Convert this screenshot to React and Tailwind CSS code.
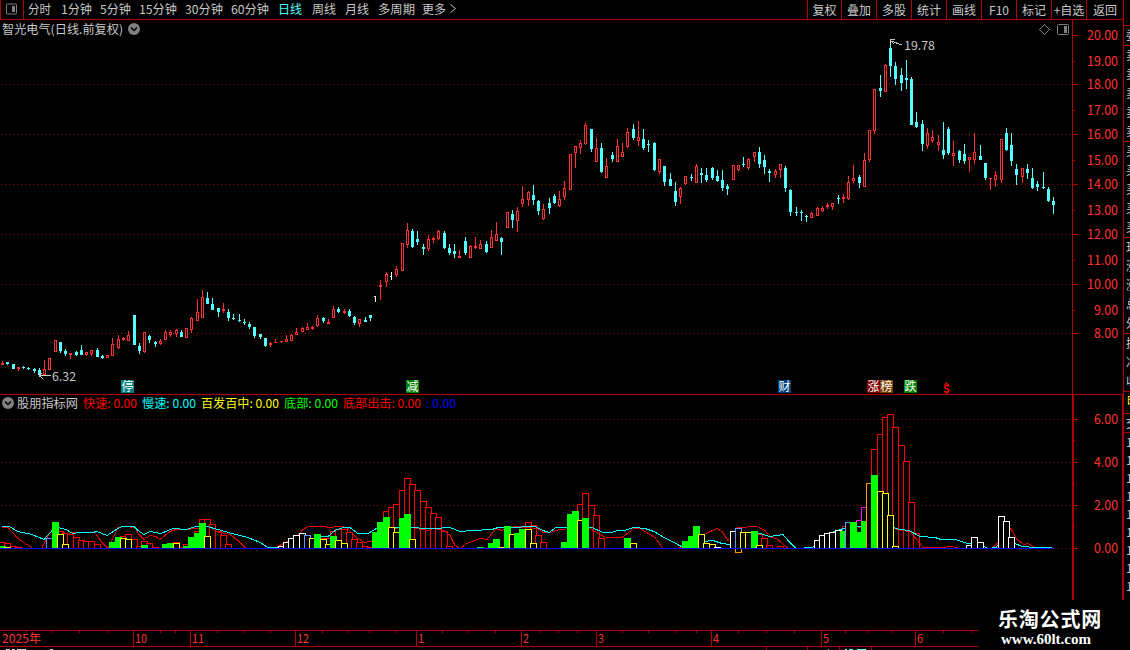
import React from 'react';

const RED = '#ff3232';
const CYAN = '#54ffff';
const LINE = '#b00000';

const periods = [
  { label: '分时', x: 28, w: 23 },
  { label: '1分钟', x: 61, w: 31 },
  { label: '5分钟', x: 100, w: 31 },
  { label: '15分钟', x: 139, w: 38 },
  { label: '30分钟', x: 185, w: 38 },
  { label: '60分钟', x: 231, w: 38 },
  { label: '日线', x: 278, w: 24, active: true },
  { label: '周线', x: 312, w: 24 },
  { label: '月线', x: 345, w: 24 },
  { label: '多周期', x: 378, w: 37 },
  { label: '更多', x: 422, w: 24 },
];

const actions = ['复权', '叠加', '多股', '统计', '画线', 'F10', '标记', '+自选', '返回'];

// x, high, body top, body bottom, low, up
const candles = [
  [2,361,363,365,365,1],[7,362,362,364,365,0],[13,364,364,369,369,0],[18,367,367,369,371,1],[23,366,367,368,369,0],
  [28,367,368,369,370,0],[34,368,369,371,373,0],[39,368,370,375,377,0],[44,360,369,375,375,1],[49,358,358,370,370,1],
  [55,340,340,352,352,1],[60,342,342,351,353,0],[65,349,351,354,356,0],[70,353,353,355,359,1],[76,351,352,355,356,0],
  [81,345,350,355,355,0],[86,352,352,355,356,1],[91,350,350,354,356,1],[97,348,350,357,357,0],[102,355,356,358,359,0],
  [107,355,355,358,358,1],[112,338,344,356,356,1],[118,335,339,348,349,1],[123,337,338,340,341,1],[128,331,335,341,341,1],
  [134,315,315,345,345,0],[139,343,346,351,354,0],[144,332,332,352,353,1],[149,335,336,340,343,0],[155,341,342,344,347,0],
  [160,339,341,344,345,1],[165,330,332,340,340,1],[170,330,332,335,337,1],[176,329,330,334,337,1],[181,330,332,337,337,0],
  [186,328,328,338,338,1],[191,317,318,330,333,1],[197,299,312,321,321,1],[202,290,297,318,318,1],[207,292,298,304,304,0],
  [212,298,304,310,310,0],[218,308,308,312,317,0],[223,303,309,311,313,1],[228,309,312,318,321,0],[233,314,318,319,320,0],
  [239,314,320,321,322,0],[244,319,322,323,325,0],[249,322,324,327,329,0],[254,327,327,336,338,0],[260,334,334,337,339,0],
  [265,338,338,346,347,0],[270,342,343,345,347,1],[275,339,342,343,343,1],[281,341,341,342,343,1],[286,335,339,342,342,1],
  [291,334,335,341,341,1],[296,328,332,335,335,1],[302,327,328,332,332,1],[307,323,327,330,330,1],[312,326,327,329,330,1],
  [317,315,318,326,327,1],[323,317,318,321,323,0],[328,319,322,324,324,1],[333,306,309,318,318,1],[338,307,309,312,313,0],
  [344,309,311,313,314,1],[349,309,311,316,317,0],[354,316,317,323,325,0],[359,319,319,324,327,1],[365,317,320,322,322,0],
  [370,315,315,318,321,0],[380,280,285,287,300,1],[386,272,274,282,287,1],[396,266,269,275,277,1],[402,243,243,271,271,1],
  [407,223,230,245,248,1],[412,229,231,247,248,0],[417,231,239,242,245,0],[423,244,247,249,255,0],[428,235,239,249,251,1],
  [433,237,238,240,243,1],[438,230,231,239,240,1],[444,231,233,248,249,0],[449,244,248,253,255,0],[454,244,251,254,258,0],
  [459,250,256,258,258,1],[465,237,241,253,255,0],[470,245,246,258,258,1],[475,237,246,248,249,1],[480,240,244,249,249,1],
  [486,241,244,252,253,0],[491,230,237,248,248,1],[496,222,234,241,241,1],[501,237,238,242,255,0],[507,212,212,228,228,1],
  [512,210,214,220,228,0],[517,207,211,221,232,1],[522,186,199,204,207,1],[528,191,192,200,206,1],[533,185,195,200,205,0],
  [538,200,201,211,215,0],[543,204,209,219,220,1],[549,198,203,208,214,0],[554,194,196,203,204,0],[559,191,199,206,207,1],
  [564,181,188,197,200,1],[570,154,154,190,190,1],[575,146,146,153,168,1],[580,140,143,148,154,1],[585,123,125,144,145,1],
  [591,129,129,149,152,0],[596,138,148,162,162,1],[601,143,148,172,173,0],[606,158,166,178,178,1],[612,152,155,159,162,0],
  [617,139,146,162,162,1],[622,143,152,157,157,1],[627,128,132,147,148,1],[633,124,129,138,140,0],[638,121,137,141,146,1],
  [643,129,139,148,150,0],[648,140,144,145,152,0],[654,142,143,170,171,0],[659,159,159,172,174,1],[664,166,166,182,186,0],
  [670,173,179,186,186,0],[675,182,191,202,206,0],[680,187,188,197,204,1],[685,176,176,184,185,1],[691,174,177,178,181,0],
  [696,164,166,183,183,1],[701,168,173,175,183,0],[706,168,175,180,182,0],[712,167,168,178,180,0],[717,170,176,181,182,0],
  [722,170,180,188,191,0],[727,184,186,189,195,0],[733,165,165,180,180,1],[738,165,165,170,171,1],[743,157,164,165,167,0],
  [748,158,159,168,170,1],[754,152,152,157,162,1],[759,147,152,164,168,0],[764,155,160,167,174,0],[769,169,171,173,182,0],
  [775,169,171,175,178,1],[780,164,164,170,178,1],[785,166,168,188,192,0],[790,189,190,212,216,0],[796,207,212,213,216,0],
  [801,210,212,213,221,0],[806,215,216,217,222,0],[811,212,213,218,218,1],[817,207,208,216,216,1],[822,206,208,211,212,1],
  [827,203,205,207,209,1],[832,203,203,207,210,1],[838,195,198,199,204,0],[843,194,197,199,203,1],[848,176,182,199,200,1],
  [853,165,178,181,183,1],[859,175,177,183,188,0],[864,153,160,187,187,1],[869,130,130,160,162,1],[874,89,89,131,134,1],
  [880,75,88,91,97,0],[885,64,65,92,92,1],[890,41,48,66,77,0],[895,62,66,79,85,0],[901,68,75,83,91,0],
  [906,60,78,80,89,0],[911,77,79,125,125,0],[916,112,122,127,128,0],[922,120,124,144,151,0],[927,128,133,146,149,1],
  [932,130,137,141,143,1],[938,135,142,145,151,1],[943,122,150,155,159,0],[948,127,129,153,155,0],[953,141,153,156,166,1],
  [959,150,151,160,163,0],[964,144,154,161,164,0],[969,157,157,160,172,1],[974,133,152,160,164,1],[980,145,156,160,160,0],
  [985,163,163,178,180,0],[990,178,178,179,190,1],[995,171,175,180,187,1],[1001,139,139,180,183,1],[1006,128,133,150,151,0],
  [1011,133,145,161,166,0],[1016,164,169,175,185,0],[1022,168,168,177,183,1],[1027,164,169,173,179,0],[1032,168,178,188,189,0],
  [1037,181,184,187,191,0],[1043,172,187,188,189,0],[1048,187,189,201,202,0],[1053,197,201,205,214,0],
];

const priceLabels = [
  ['20.00', 35], ['19.00', 61], ['18.00', 84], ['17.00', 110], ['16.00', 134], ['15.00', 160], ['14.00', 184],
  ['13.00', 210], ['12.00', 234], ['11.00', 260], ['10.00', 284], ['9.00', 310], ['8.00', 333],
];

const momentum = [
  [2,542],[7,543],[13,546],[18,547],[60,531],[65,533],[70,534],[76,537],[81,540],[86,541],[91,541],[97,544],
  [123,536],[128,534],[134,539],[139,546],[144,541],[149,543],[155,547],[176,542],[181,547],[186,544],[197,531],
  [202,519],[207,519],[212,524],[218,531],[223,535],[228,544],[323,538],[328,538],[333,531],[338,529],[344,529],
  [349,532],[354,539],[359,542],[365,546],[370,547],[386,511],[391,507],[396,504],[402,490],[407,478],[412,484],
  [417,490],[423,501],[428,507],[433,513],[438,517],[444,531],[449,546],[528,522],[533,525],[538,535],[543,542],
  [580,504],[585,493],[591,505],[596,515],[601,538],[759,534],[764,538],[769,545],[780,546],
  [859,520,'#ff00ff'],[864,507,'#ff00ff'],[874,449],[880,434],[885,417],[890,414],[895,427],[901,445],[906,461],[911,502],[916,533],
];

const G = '#00ff00';
const Y = '#ffff00';
const W = '#ffffff';
const B = '#6496ff';
const signals = [
  [2,546,G],[7,547,Y],[49,538,B],[55,522,G],[60,534,Y],[65,544,Y],[112,542,G],[118,537,G],[123,538,Y],[128,539,Y],
  [144,545,G],[165,544,G],[170,543,G],[176,543,Y],[186,546,G],[191,537,G],[197,533,G],[202,523,G],[207,536,Y],
  [281,546,W],[286,542,W],[291,538,W],[296,535,W],[302,533,W],[307,535,B],[312,538,Y],[317,534,G],[323,539,Y],
  [328,544,Y],[333,536,G],[338,540,Y],[344,543,Y],[375,532,G],[380,522,G],[386,517,G],[391,527,Y],[396,532,Y],
  [402,518,G],[407,514,G],[412,539,Y],[480,547,G],[491,543,G],[496,539,G],[501,547,Y],[507,526,G],[512,534,Y],
  [517,533,G],[522,529,G],[528,529,Y],[533,543,Y],[564,542,G],[570,514,G],[575,511,G],[580,520,Y],[585,518,G],
  [627,538,G],[633,543,Y],[685,541,G],[691,536,G],[696,526,G],[701,534,Y],[706,543,Y],[712,544,Y],[717,547,W],
  [733,531,W],[738,528,B],[743,532,Y],[748,532,Y],[754,531,G],[759,545,Y],[817,540,W],[822,535,W],[827,533,W],
  [832,532,W],[838,530,W],[843,531,G],[848,522,B],[853,522,G],[859,532,G],[864,521,G],[869,483,'#ff9600'],[874,475,G],
  [880,491,Y],[885,493,Y],[890,515,Y],[895,546,Y],[969,545,W],[974,537,W],[980,542,W],[1001,516,W],[1006,521,W],[1011,537,W],
];

const slow =
  '2,526 9,526 18,531 32,534 44,539 53,529 58,527 66,529 73,533 80,532 92,532 97,531 107,535 118,528 122,526 134,526 138,530 144,534 150,531 161,533 173,528 186,529 196,526 207,526 218,529 232,533 248,537 260,542 268,547 280,547 300,545 322,536 328,536 335,530 343,527 350,527 358,533 368,533 378,527 415,527 423,528 435,528 450,527 460,531 472,530 492,529 498,527 507,527 535,526 543,530 549,532 556,527 568,527 592,527 603,532 612,532 617,530 624,530 634,527 645,528 654,531 664,537 676,543 683,547 695,545 704,541 713,540 722,543 730,544 738,533 760,533 770,536 783,534 788,540 796,548 812,547 820,544 832,532 850,526 880,527 893,527 900,529 909,530 920,536 935,537 941,539 955,539 968,543 980,544 988,548 996,547 1005,535 1015,543 1022,546 1035,547 1052,547';
const fast = [
  '2,527 8,527 18,538 33,548',
  '42,547 50,532 55,529 66,533 72,532 95,532 102,542 108,548 118,527 124,526 135,527 139,534 144,539 150,535 156,536 160,539 170,531 176,529 186,529 196,528 210,526 216,531 230,534 238,540 246,548',
  '276,547 298,535 303,529 308,526 325,526 328,527 340,526 347,527 356,537 365,542 375,540 385,528 412,527 422,529 428,530 433,528 444,530 450,535 455,545 460,548 467,543 480,538 487,539 496,528 502,530 507,528 515,526 538,528 543,532 550,532 560,529 572,528 588,527 606,537 622,537 634,528 640,528 655,537 663,548',
  '676,548 683,547 695,538 717,528 722,531 728,540 738,527 757,526 765,530 770,536 778,539 788,548',
  '826,545 838,534 843,526 853,526 862,527 890,527 902,530 910,531 916,538 923,547 940,547 952,546 960,548',
  '992,548 1000,540 1008,526 1012,530 1017,539 1024,544 1028,543 1036,548',
];

const events = [
  { label: '停', x: 121, bg: '#008080' },
  { label: '减', x: 406, bg: '#008000' },
  { label: '财', x: 778, bg: '#004080' },
  { label: '涨', x: 867, bg: '#800000' },
  { label: '榜', x: 880, bg: '#804000' },
  { label: '跌', x: 904, bg: '#008000' },
];

const months = [
  ['10', 133], ['11', 190], ['12', 295], ['1', 416], ['2', 521], ['3', 596], ['4', 711], ['5', 821], ['6', 915],
];

const legend = [
  { label: '快速: 0.00', x: 83, w: 54, color: '#ff0000' },
  { label: '慢速: 0.00', x: 142, w: 54, color: '#00ffff' },
  { label: '百发百中: 0.00', x: 201, w: 78, color: '#ffff00' },
  { label: '底部: 0.00', x: 284, w: 54, color: '#00ff00' },
  { label: '底部出击: 0.00', x: 343, w: 78, color: '#ff0000' },
  { label: ': 0.00', x: 426, w: 30, color: '#0000ff' },
];

const SvgText = ({ x, y, w, fill, children, size = 12 }) => (
  <text x={x} y={y} textLength={w} lengthAdjust="spacingAndGlyphs" fill={fill} fontSize={size}>
    {children}
  </text>
);

const DropIcon = ({ cx, cy }) => (
  <g shapeRendering="auto">
    <circle cx={cx} cy={cy} r="6" fill="#808080" />
    <path d={`M${cx - 3} ${cy - 1.5}l3 3l3 -3`} fill="none" stroke="#000" strokeWidth="1.5" />
  </g>
);

const PanelIcon = ({ className }) => (
  <svg width="13" height="12" viewBox="0 0 13 12" className={className}>
    <rect x="1.5" y="1" width="10" height="10" rx="1" fill="none" stroke="#808080" />
    <path d="M7 3h3v6h-3z" fill="#808080" />
  </svg>
);

const Toolbar = () => (
  <header className="flex h-5 shrink-0 border-b border-[#b00000] text-[#c8c8c8]">
    <div className="flex w-6 shrink-0 items-center justify-center border-x border-[#b00000] pr-[2px]">
      <PanelIcon className="-mt-0.5 shrink-0" />
    </div>
    <nav className="w-[783px] shrink-0">
      <svg width="783" height="19" viewBox="24 0 783 19">
        {periods.map((p) => (
          <SvgText key={p.label} x={p.x} y={13.5} w={p.w} fill={p.active ? CYAN : '#c8c8c8'}>{p.label}</SvgText>
        ))}
        <path d="M450.5 4.5l5 4l-5 4" fill="none" stroke="#c8c8c8" />
      </svg>
    </nav>
    {actions.map((a) => (
      <button
        key={a}
        className="flex w-[35px] shrink-0 items-center justify-center whitespace-nowrap border-l border-[#b00000] text-[12px] leading-none first-of-type:w-[34px] last-of-type:w-[37px]"
      >
        {a}
      </button>
    ))}
  </header>
);

const Candle = ({ d }) => {
  const [x, high, top, bottom, low, up] = d;
  const hollow = up && bottom - top > 2;
  const color = up ? RED : CYAN;
  return (
    <g fill={color}>
      <rect x={x} y={high} width="1" height={Math.max(low - high, 1)} />
      <rect x={x - 1} y={top} width="3" height={bottom - top} />
      {hollow && <rect x={x} y={top + 1} width="1" height={bottom - top - 2} fill="#000" />}
    </g>
  );
};

const GridLines = ({ rows }) =>
  rows.map((y) => (
    <line key={y} x1="1" x2="1072" y1={y + 0.5} y2={y + 0.5} stroke="#a00000" strokeDasharray="1 3" />
  ));

const PriceChart = () => (
  <svg width="1123" height="374" viewBox="0 20 1123 374" shapeRendering="crispEdges" className="block shrink-0">
    <GridLines rows={[84, 134, 184, 234, 284, 333]} />
    {candles.map((d) => <Candle key={d[0]} d={d} />)}
    <path d="M375.5 296v6M374 296.5h2M391.5 272v8M390 276.5h2" stroke="#fff" />
    <SvgText x={2} y={34} w={121} fill="#c8c8c8">智光电气(日线.前复权)</SvgText>
    <DropIcon cx={134} cy={29} />
    <path d="M39 375.5h12M39 375l4 4M39 375l3 -2" fill="none" stroke="#c8c8c8" />
    <SvgText x={52} y={381} w={24} fill="#c8c8c8">6.32</SvgText>
    <path d="M890.5 44v-4.5h4M891 41l11 4M891 41l3 3" fill="none" stroke="#c8c8c8" />
    <SvgText x={904} y={50} w={31} fill="#c8c8c8">19.78</SvgText>
    <path d="M1044.5 24.5l5 5l-5 5l-5 -5z" fill="none" stroke="#808080" />
    <rect x="1057.5" y="24.5" width="11" height="10" rx="1" fill="none" stroke="#808080" shapeRendering="auto" />
    <rect x="1064" y="26" width="3" height="7" fill="#808080" />
    {events.map((e) => (
      <g key={e.label}>
        <rect x={e.x} y="380" width="13" height="13" fill={e.bg} />
        <SvgText x={e.x + 0.5} y={391} w={12} fill="#fff">{e.label}</SvgText>
      </g>
    ))}
    <path d="M943.5 385.5l3 -3l3 3" fill="none" stroke="#ff0000" />
    <text x="943" y="393" fill="#ff0000" fontSize="11" fontWeight="700" textLength="7" lengthAdjust="spacingAndGlyphs">$</text>
    <rect x="1072" y="20" width="1" height="374" fill={LINE} />
    {priceLabels.map(([label, y], i) => (
      <g key={label}>
        <rect x="1073" y={y} width={i % 2 ? 2 : 5} height="1" fill={LINE} />
        <SvgText x={label.length > 4 ? 1087 : 1094} y={y + 5} w={label.length > 4 ? 31 : 24} fill={RED} size={13}>{label}</SvgText>
      </g>
    ))}
  </svg>
);

const Bar = ({ x, y, color }) =>
  color === G ? (
    <rect x={x - 3} y={y} width="7" height={548 - y} fill={G} />
  ) : (
    <rect x={x - 2.5} y={y + 0.5} width="6" height={548 - y} fill="#000" stroke={color} />
  );

const IndicatorChart = () => (
  <svg width="1123" height="235" viewBox="0 395 1123 235" shapeRendering="crispEdges" className="block shrink-0">
    <GridLines rows={[419, 462, 505, 548]} />
    <DropIcon cx={8} cy={403} />
    <SvgText x={17} y={408} w={61} fill="#c8c8c8">股朋指标网</SvgText>
    {legend.map((l) => (
      <SvgText key={l.label} x={l.x} y={407.5} w={l.w} fill={l.color}>{l.label}</SvgText>
    ))}
    {momentum.map(([x, y, color]) => <Bar key={x} x={x} y={y} color={color || '#ff0000'} />)}
    {fast.map((points) => <polyline key={points} points={points} fill="none" stroke="#e00000" transform="translate(0 .5)" />)}
    <polyline points={slow} fill="none" stroke="#00ffff" transform="translate(0 .5)" />
    {signals.map(([x, y, color]) => <Bar key={x} x={x} y={y} color={color} />)}
    <rect x="735.5" y="548.5" width="6" height="4" fill="none" stroke="#ff9600" />
    <rect x="0" y="548" width="1053" height="1" fill="#0000ff" />
    <rect x="1072" y="395" width="2" height="205" fill={LINE} />
    <rect x="1122" y="395" width="1" height="205" fill={LINE} />
    {[['6.00', 419], ['4.00', 462], ['2.00', 505], ['0.00', 548]].map(([label, y]) => (
      <g key={label}>
        <rect x="1074" y={y} width="4" height="1" fill={LINE} />
        {y > 419 && <rect x="1074" y={y - 22} width="1" height="1" fill={LINE} />}
        <SvgText x={1094} y={y + 5} w={24} fill={RED} size={13}>{label}</SvgText>
      </g>
    ))}
  </svg>
);

const minorTicks = [26, 51, 79, 107, 160, 175, 217, 243, 270, 322, 348, 369, 396, 442, 468, 495, 540, 558, 577, 622, 648, 675, 696, 738, 766, 794, 845, 868, 892, 943, 971];

const TimeAxis = () => (
  <svg width="978" height="20" viewBox="0 630 978 20" shapeRendering="crispEdges" className="block shrink-0">
    <path d="M0 630.5h978M0 646.5h978" stroke={LINE} />
    <SvgText x={2} y={643} w={39} fill={RED}>2025年</SvgText>
    {minorTicks.map((x) => <rect key={x} x={x} y="631" width="1" height="2" fill={LINE} />)}
    {months.map(([label, x]) => (
      <g key={label}>
        <rect x={x} y="631" width="1" height="15" fill={LINE} />
        <SvgText x={x + 2} y={643} w={label.length > 1 ? 12 : 6} fill={RED}>{label}</SvgText>
      </g>
    ))}
    <path d="M766.5 647v3M807.5 647v3M839.5 647v3M871.5 647v3" stroke={LINE} />
    <path d="M6 649.5h4M12 649.5h3M17 649.5h9M50 649.5h3M828 649.5h1" stroke="#c8c8c8" />
    <path d="M845 649.5h2M849 649.5h4M857 649.5h9" stroke={CYAN} />
  </svg>
);

const sideGroups = [
  ['卖', '卖', '卖', '卖', '卖'],
  ['买', '买', '买', '买', '买'],
  ['现', '涨', '涨', '总', '外'],
  ['换', '净', '收'],
];

const SideStrip = () => (
  <aside className="flex h-[600px] w-[7px] shrink-0 flex-col overflow-hidden border-l border-[#b00000] text-[12px] leading-[18px] text-[#c8c8c8]">
    <div className="mt-[25px] h-5 shrink-0 border-t border-[#b00000] pl-[2px]">
      <div className="w-3">委</div>
    </div>
    {sideGroups.map((group, i) => (
      <div key={i} className="flex shrink-0 flex-col border-t border-[#b00000] pl-[2px]">
        {group.map((t, j) => <div key={j} className="h-[19px] w-3">{t}</div>)}
      </div>
    ))}
    <div className="h-[22px] w-3 shrink-0 border-t border-[#b00000] pl-[3px] text-[#ffff00]">明</div>
    <div className="h-5 w-3 shrink-0 border-y border-[#b00000] pl-[2px]">交</div>
    {[0, 1, 2, 3, 4, 5, 6, 7, 8].map((i) => <div key={i} className="h-[18px] w-3 shrink-0 pl-[2px]">1</div>)}
  </aside>
);

export default function App() {
  return (
    <div className="flex h-[650px] w-[1130px] overflow-hidden bg-black font-normal [font-family:'Noto_Sans_CJK_SC',sans-serif]">
      <div className="flex w-[1123px] shrink-0 flex-col">
        <Toolbar />
        <PriceChart />
        <div className="h-px shrink-0 bg-[#b00000]" />
        <IndicatorChart />
        <footer className="flex">
          <TimeAxis />
          <div className="relative z-10 -mt-[30px] flex h-[50px] w-[152px] shrink-0 flex-col items-start bg-black pl-[20px] pt-[8px] text-white">
            <span className="text-[20px] font-bold leading-[22px] tracking-[0.8px]">乐淘公式网</span>
            <span className="ml-[3px] text-[15px] font-bold leading-[18px] [font-family:'Liberation_Serif',serif]">www.60lt.com</span>
          </div>
        </footer>
      </div>
      <SideStrip />
    </div>
  );
}
